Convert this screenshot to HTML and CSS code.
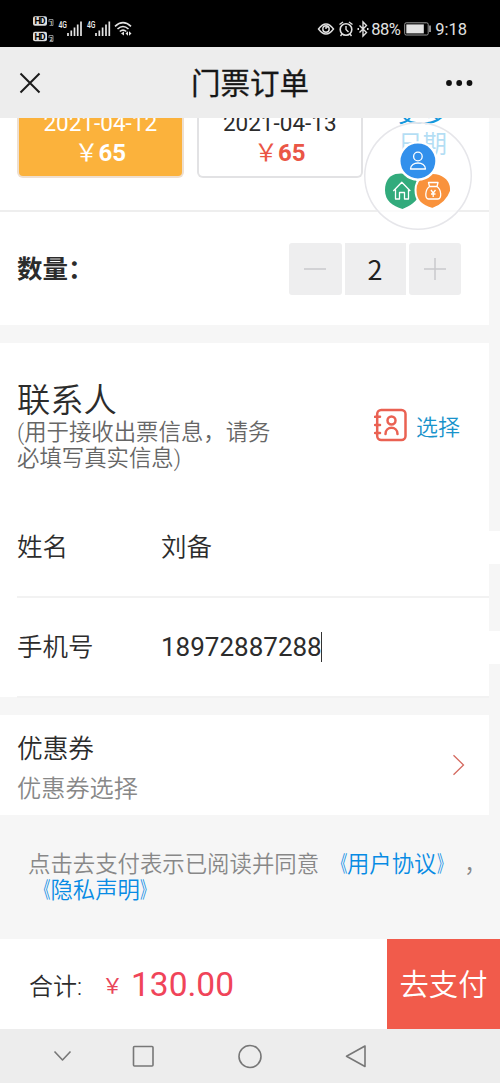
FILE: index.html
```html
<!DOCTYPE html>
<html lang="zh-CN">
<head>
<meta charset="utf-8">
<title>门票订单</title>
<link rel="stylesheet" href="styles.css">
</head>
<body>
<div class="phone">
  <header class="status">
    <svg class="status-left" width="104" height="30" viewBox="32 14 104 30">
      <g fill="#ddd">
        <rect x="33" y="16.300" width="14" height="9.500" rx="2"/>
        <rect x="33" y="31.800" width="14" height="9.500" rx="2"/>
      </g>
      <g class="hd"><text x="34.500" y="24.300" textLength="11">HD</text><text x="34.500" y="39.800" textLength="11">HD</text></g>
      <g class="sim"><text x="49.800" y="25">1</text><text x="49.800" y="41">2</text></g>
      <g fill="none" stroke="#aaa" stroke-width=".8"><path d="M49 22V19.500H53V25.500H49.500"/><path d="M49 38V35.500H53V41.500H49.500"/></g>
      <g class="net"><text x="58.500" y="27.500" textLength="8.500" lengthAdjust="spacingAndGlyphs">4G</text><text x="87" y="27.500" textLength="8.500" lengthAdjust="spacingAndGlyphs">4G</text></g>
      <g stroke="#e4e4e4" stroke-width="1.700">
        <path d="M68 36V33M71.300 36V30.500M74.500 36V27.500M77.700 36V24.500M81 36V21.500"/>
        <path d="M96 36V33M99.300 36V30.500M102.600 36V27.500M106 36V24.500M109.300 36V21.500"/>
      </g>
      <g fill="none" stroke="#e4e4e4" stroke-width="1.600">
        <path d="M115 26.300Q123 18.800 131 26.300M117.500 29Q123 24 128.500 29M119.800 31.500Q123 28.800 126.300 31.500"/>
      </g>
      <path d="M121 33.500L124 31.500V35.500ZM128 31.300V35.700L125.500 33.500ZM129 31.300L131.500 33.500L129 35.700Z" fill="#e4e4e4"/>
    </svg>
    <div class="status-right">
      <svg width="53" height="18" viewBox="319 19.500 53 18" fill="none" stroke="#e0e0e0" stroke-width="1.400">
        <path d="M320.500 28.500Q328 18.500 335.500 28.500Q328 38.500 320.500 28.500Z"/><circle cx="328" cy="28.500" r="3.200"/><path d="M328 28.500V26.500H330" />
        <circle cx="348" cy="29" r="5.800" stroke-width="1.600"/><path d="M348 25.500V29L350.500 31.500M341.500 24L345 21.500M351 21.500L354.500 24M344 33.500L342.500 35.500M352 33.500L353.500 35.500"/>
        <path d="M361.500 25L368.500 32L365 35.500V21.500L368.500 25L361.500 32"/><path d="M359.500 28.500H361M369 28.500H370.500" stroke-width="1.800"/>
      </svg>
      <span class="percent">88%</span>
      <svg class="battery" width="28" height="14" viewBox="0 0 28 14"><rect x=".7" y=".8" width="23.500" height="12.200" rx="1.500" fill="none" stroke="#999"/><rect x="2.300" y="2.400" width="17.500" height="9" fill="#e2e2e2"/><path d="M26 3.500V10" stroke="#bbb" stroke-width="1.500"/></svg>
      <span class="clock">9:18</span>
    </div>
  </header>

  <nav class="navbar">
    <svg width="22" height="22" viewBox="0 0 22 22"><path d="M1.500 1.500L20.500 20.500M20.500 1.500L1.500 20.500" stroke="#1b1b1b" stroke-width="2"/></svg>
    <h1 class="title">门票订单</h1>
    <svg width="28" height="8" viewBox="0 0 28 8" fill="#111"><circle cx="4" cy="4" r="2.900"/><circle cx="14.200" cy="4" r="2.900"/><circle cx="24.500" cy="4" r="2.900"/></svg>
  </nav>

  <main class="page">
    <section class="card dates-card">
      <div class="dates">
        <div class="date selected"><span class="day">2021-04-12</span><span class="price"><i>￥</i>65</span></div>
        <div class="date"><span class="day">2021-04-13</span><span class="price"><i>￥</i>65</span></div>
        <div class="more">更多<br>日期</div>
      </div>
      <div class="quantity">
        <span class="quantity-label">数量：</span>
        <div class="stepper">
          <span class="step"><svg width="24" height="24" viewBox="0 0 24 24"><path d="M1 12H23"/></svg></span>
          <span class="count">2</span>
          <span class="step"><svg width="24" height="24" viewBox="0 0 24 24"><path d="M1 12H23M12 1V23"/></svg></span>
        </div>
      </div>
    </section>

    <section class="card contact">
      <div class="contact-head">
        <div>
          <h2 class="contact-title">联系人</h2>
          <p class="hint">(用于接收出票信息，请务<br>必填写真实信息)</p>
        </div>
        <div class="choose">
          <svg width="33" height="34" viewBox="0 0 33 34" fill="none" stroke="#ea6152" stroke-width="2.500" stroke-linecap="round"><rect x="3.200" y="2" width="28.300" height="30" rx="4"/><circle cx="17.500" cy="12.500" r="4"/><path d="M11.500 26C11.500 17.800 23.500 17.800 23.500 26M1 8.800H6M1 17H6M1 25H6"/></svg>
          <span>选择</span>
        </div>
      </div>
      <div class="field"><label class="field-label">姓名</label><div class="input name-input">刘备</div></div>
      <div class="field"><label class="field-label">手机号</label><div class="input">18972887288<b class="caret"></b></div></div>
    </section>

    <section class="card coupon">
      <div class="coupon-text"><div class="coupon-title">优惠券</div><div class="coupon-value">优惠券选择</div></div>
      <svg width="13" height="22" viewBox="0 0 13 22"><path d="M1.500 1.200L11.500 11L1.500 20.800" fill="none" stroke="#d4695f" stroke-width="1.300"/></svg>
    </section>

    <p class="agreement">点击去支付表示已阅读并同意 <a><span class="open">《</span>用户协议<span class="close">》</span></a> ，<br><a><span class="open">《</span>隐私声明<span class="close">》</span></a></p>

    <div class="float-menu">
      <svg width="108" height="108" viewBox="364.500 122 108 108">
        <path d="M396 174C411 171 421 180 420 193C418 202 410 206 403 209C393 206 385.500 201 385.500 190C385.500 182 389 176 396 174Z" fill="#32ab7c"/>
        <path d="M440 174C448 177 452 183 451.500 191C448 201 441 206 433 209C422 206 416 201 416 190C416 178 428 170 440 174Z" fill="#f9923c" stroke="#fff" stroke-width="2"/>
        <circle cx="418.400" cy="161" r="18.600" fill="#3290ec" stroke="#fff" stroke-width="2.400"/>
        <g fill="none" stroke="#fff" stroke-width="1.300" stroke-linejoin="round">
          <circle cx="418.400" cy="156.500" r="4.300"/><path d="M411 169C411 161 426 161 426 169Z"/>
          <path d="M393.800 191L402.300 182.300L410.800 191M396 189.500V199H400V192.500H405V199H409V189.500"/>
          <path d="M430 186.500C425.500 189.500 425 199 429 199H438.500C442.500 199 442 189.500 437.500 186.500ZM430 186.500L429 182.500H438.500L437.500 186.500M431.500 190L433.700 193L436 190M433.700 193V197M431.500 194H436"/>
        </g>
      </svg>
    </div>
  </main>

  <footer class="paybar">
    <span class="total-label">合计:</span><span class="total-sign">￥</span><span class="total">130.00</span>
    <div class="pay">去支付</div>
  </footer>

  <div class="keys">
    <svg width="500" height="54" viewBox="0 1029 500 54" fill="none" stroke="#777" stroke-width="1.600" stroke-linejoin="round"><path d="M54.500 1051.500L62.500 1060L70.500 1051.500"/><rect x="133.500" y="1046.500" width="19.500" height="19.500" rx="1"/><circle cx="250" cy="1056.500" r="11"/><path d="M365 1046V1066.500L346.500 1056.300Z"/></svg>
  </div>
</div>
</body>
</html>
```
FILE: styles.css
```css
* { box-sizing: border-box; }
body { margin: 0; font-family: Roboto, "Noto Sans CJK SC", sans-serif; color: #2c2c2c; }
h1, h2, p { margin: 0; font-weight: 400; }
svg { display: block; flex: none; }
.phone { width: 500px; height: 1083px; display: flex; flex-direction: column; overflow: hidden; background: #f6f6f6; white-space: nowrap; }

.status { height: 47px; background: #000; display: flex; justify-content: space-between; padding: 0 33px 0 32px; color: #e2e2e2; }
.status-left { margin-top: 14px; }
.hd { font: 700 9px Roboto, sans-serif; fill: #000; }
.sim { font: 700 5px Roboto, sans-serif; fill: #ddd; }
.net { font: 500 9px Roboto, sans-serif; fill: #eee; }
.status-right { display: flex; align-items: center; height: 58px; font-size: 16.500px; }
.percent { width: 29px; margin: 0 4px 0 1px; letter-spacing: -.5px; }
.clock { margin-left: 3px; }

.navbar { height: 71px; background: #ededed; display: flex; align-items: center; padding: 0 27px 0 19px; color: #161616; }
.title { margin: 2px auto 0 150px; font-size: 29.500px; line-height: 40px; font-weight: 400; -webkit-text-stroke: .3px #161616; }

.page { height: 821px; position: relative; overflow: hidden; }
.card { width: 489px; background: #fff; }
.dates-card { height: 207px; }
.dates { height: 94px; display: flex; gap: 13px; padding-left: 17px; border-bottom: 2px solid #eee; }
.date { width: 166.500px; height: 60px; overflow: hidden; display: flex; flex-direction: column; justify-content: flex-end; align-items: center; padding-bottom: 8px; border: 2px solid #e2e2e4; border-top: 0; border-radius: 0 0 6px 6px; }
.day { font-size: 22.500px; line-height: 30px; flex: none; }
.price { font-size: 24px; line-height: 30px; font-weight: 700; color: #ea5646; flex: none; }
.price i { font-style: normal; font-weight: 400; }
.selected { background: #fbb23c; border-color: #eedfd0; color: #fff; }
.selected .price { color: #fff; }
.more { width: 49px; margin: -20px 0 0 22px; font-size: 24.500px; line-height: 31px; color: #1598dc; }

.quantity { height: 113px; display: flex; justify-content: space-between; align-items: center; padding: 0 28px 0 17px; }
.quantity-label { padding-bottom: 5px; font-size: 25.500px; font-weight: 700; }
.stepper { display: flex; gap: 3px; }
.step, .count { height: 52px; display: flex; align-items: center; justify-content: center; background: #eeeeef; }
.step { width: 52.500px; border-radius: 3px; stroke: #c9c9cd; stroke-width: 1.500; }
.count { width: 61px; font-family: "Noto Sans CJK SC", sans-serif; font-size: 27px; line-height: 52px; color: #222; }

.contact { height: 354px; margin-top: 18px; }
.contact-head { height: 155px; padding: 38px 29px 0 17px; display: flex; justify-content: space-between; }
.contact-title { font-size: 33.300px; line-height: 39px; font-weight: 350; }
.hint { font-size: 22.400px; line-height: 25.500px; font-weight: 350; color: #666; }
.choose { height: 34px; margin-top: 27px; display: flex; align-items: center; gap: 9px; font-size: 22px; color: #1993cb; font-weight: 350; }
.field { height: 100px; display: flex; align-items: center; margin-left: 17px; border-bottom: 2px solid #f2f2f2; font-size: 25.500px; font-weight: 350; }
.field-label { flex: 0 0 144px; padding-bottom: 5px; }
.input { flex: 0 0 339px; height: 33px; display: flex; align-items: center; background: #fff; font-size: 26px; font-weight: 400; }
.name-input { padding-bottom: 5px; font-size: 25.500px; font-weight: 350; }
.caret { width: 1.500px; height: 30px; margin-left: -1px; background: #333; }

.coupon { height: 100px; margin-top: 18px; padding: 0 24px 0 17px; display: flex; justify-content: space-between; align-items: center; }
.coupon-text { padding-top: 8px; }
.coupon-title { font-size: 25.700px; line-height: 40px; font-weight: 350; }
.coupon-value { font-size: 24.200px; line-height: 40px; font-weight: 350; color: #888; }
.agreement { padding: 37px 0 0 28px; font-size: 22.400px; line-height: 25.500px; font-weight: 350; color: #888; }
.agreement a { color: #078be4; }
.open, .close { display: inline-block; transform: scaleX(.62); }
.open { transform-origin: right; }
.close { transform-origin: left; }
.float-menu { position: absolute; left: 364px; top: 4px; width: 108px; height: 108px; border-radius: 50%; background: rgba(255, 255, 255, .68); box-shadow: inset 0 0 0 1.500px #e6e6ea; }

.paybar { height: 90px; background: #fff; display: flex; align-items: center; padding-left: 29px; }
.total-label { width: 73px; font-size: 24px; font-weight: 350; }
.total-sign { width: 29px; font-size: 21px; color: #e94558; }
.total { font-size: 33.500px; color: #f04459; }
.pay { width: 113px; height: 90px; margin-left: auto; padding-bottom: 5px; background: #f15b4b; color: #fff; font-size: 29.300px; font-weight: 350; display: flex; align-items: center; justify-content: center; }
.keys { height: 54px; background: #ededed; }
```
